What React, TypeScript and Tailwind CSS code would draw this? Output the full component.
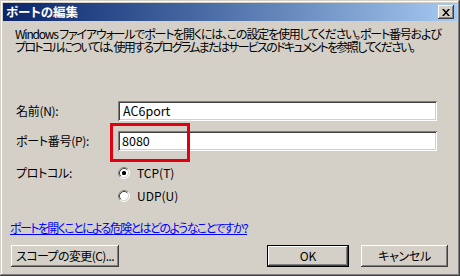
import React from "react";

const raised =
  "shadow-[inset_-1px_-1px_0_#404040,inset_1px_1px_0_#FFFFFF,inset_-2px_-2px_0_#808080,inset_2px_2px_0_#D4D0C8]";
const sunken =
  "shadow-[inset_1px_1px_0_#808080,inset_-1px_-1px_0_#FFFFFF,inset_2px_2px_0_#404040,inset_-2px_-2px_0_#D4D0C8]";

function Radio({ checked }: { checked: boolean }) {
  return (
    <svg width="12" height="12" viewBox="0 0 12 12" className="shrink-0">
      <circle cx="6" cy="6" r="5" fill="#FFFFFF" />
      <path d="M2.11 9.89 A5.5 5.5 0 0 1 9.89 2.11" stroke="#808080" strokeWidth="1" fill="none" />
      <path d="M9.89 2.11 A5.5 5.5 0 0 1 2.11 9.89" stroke="#FFFFFF" strokeWidth="1" fill="none" />
      <path d="M2.82 9.18 A4.5 4.5 0 0 1 9.18 2.82" stroke="#404040" strokeWidth="1" fill="none" />
      <path d="M9.18 2.82 A4.5 4.5 0 0 1 2.82 9.18" stroke="#D4D0C8" strokeWidth="1" fill="none" />
      {checked && <rect x="4" y="4" width="4" height="4" rx="1.5" fill="#000000" />}
    </svg>
  );
}

export default function App() {
  return (
    <div className="relative w-[460px] h-[276px] overflow-hidden bg-[#D4D0C8] p-[3px] shadow-[inset_-1px_-1px_0_#404040,inset_1px_1px_0_#D4D0C8,inset_-2px_-2px_0_#808080,inset_2px_2px_0_#FFFFFF] flex flex-col font-['Noto_Sans_CJK_JP',sans-serif] text-black [font-feature-settings:'palt']">
      {/* Title bar */}
      <div className="h-[18px] bg-linear-to-r from-[#0A246A] to-[#A6CAF0] flex items-center justify-between pl-[3px] pr-[3px]">
        <span className="text-white font-bold text-[12.5px] leading-none">ポートの編集</span>
        <div className={`w-[16px] h-[14px] bg-[#D4D0C8] ${raised} flex items-center justify-center`}>
          <svg width="8" height="7" viewBox="0 0 8 7">
            <path d="M0 0h2l2 2.5L6 0h2L5 3.5 8 7H6L4 4.5 2 7H0l3-3.5z" fill="#000" />
          </svg>
        </div>
      </div>

      {/* Description */}
      <div className="mt-[6px] pl-[12px] text-[12px] whitespace-nowrap flex flex-col">
        <span className="h-[13px] leading-[13px] tracking-[-1.2px]">
          Windows ファイアウォールでポートを開くには、この設定を使用してください。ポート番号および
        </span>
        <span className="h-[13px] leading-[13px] tracking-[-1.7px]">
          プロトコルについては、使用するプログラムまたはサービスのドキュメントを参照してください。
        </span>
      </div>

      {/* Name */}
      <div className="mt-[48px] flex items-center h-[20px]">
        <span className="w-[115px] pl-[13px] text-[12px] tracking-[-0.3px]">名前(N):</span>
        <div className={`w-[319px] h-[20px] bg-white ${sunken} flex items-center pl-[5px] text-[12.5px]`}>AC6port</div>
      </div>

      {/* Port */}
      <div className="mt-[10px] flex items-center h-[20px]">
        <span className="w-[115px] pl-[13px] text-[12px] tracking-[-0.3px]">ポート番号(P):</span>
        <div className={`w-[319px] h-[20px] bg-white ${sunken} flex items-center pl-[4px] text-[12.5px]`}>8080</div>
      </div>

      {/* Protocol */}
      <div className="mt-[15px] flex items-center h-[14px]">
        <span className="w-[115px] pl-[13px] text-[12px] tracking-[-0.3px]">プロトコル:</span>
        <Radio checked />
        <span className="ml-[7px] text-[12px]">TCP(T)</span>
      </div>
      <div className="mt-[9px] flex items-center h-[14px]">
        <span className="w-[115px]" />
        <Radio checked={false} />
        <span className="ml-[7px] text-[12px]">UDP(U)</span>
      </div>

      {/* Link */}
      <div className="mt-[19px] pl-[7px] h-[12px] flex items-center">
        <span className="text-[12px] leading-[12px] tracking-[-1.6px] text-[#0000FF] underline underline-offset-1">
          ポートを開くことによる危険とはどのようなことですか?
        </span>
      </div>

      {/* Buttons */}
      <div className="mt-[11px] flex items-center h-[22px] pl-[8px]">
        <div className={`w-[108px] h-[22px] ${raised} flex items-center justify-center text-[12px] tracking-[-0.6px]`}>
          スコープの変更(C)...
        </div>
        <div className="ml-[148px] w-[82px] h-[22px] border border-black">
          <div className={`w-full h-full ${raised} flex items-center justify-center text-[12px]`}>OK</div>
        </div>
        <div className={`ml-[12px] w-[87px] h-[22px] ${raised} flex items-center justify-center text-[12px] tracking-[-0.3px]`}>
          キャンセル
        </div>
      </div>

      {/* Red annotation box */}
      <div className="absolute left-[110px] top-[123px] w-[80px] h-[39px] border-[3px] border-[#E0000F]" />
    </div>
  );
}
